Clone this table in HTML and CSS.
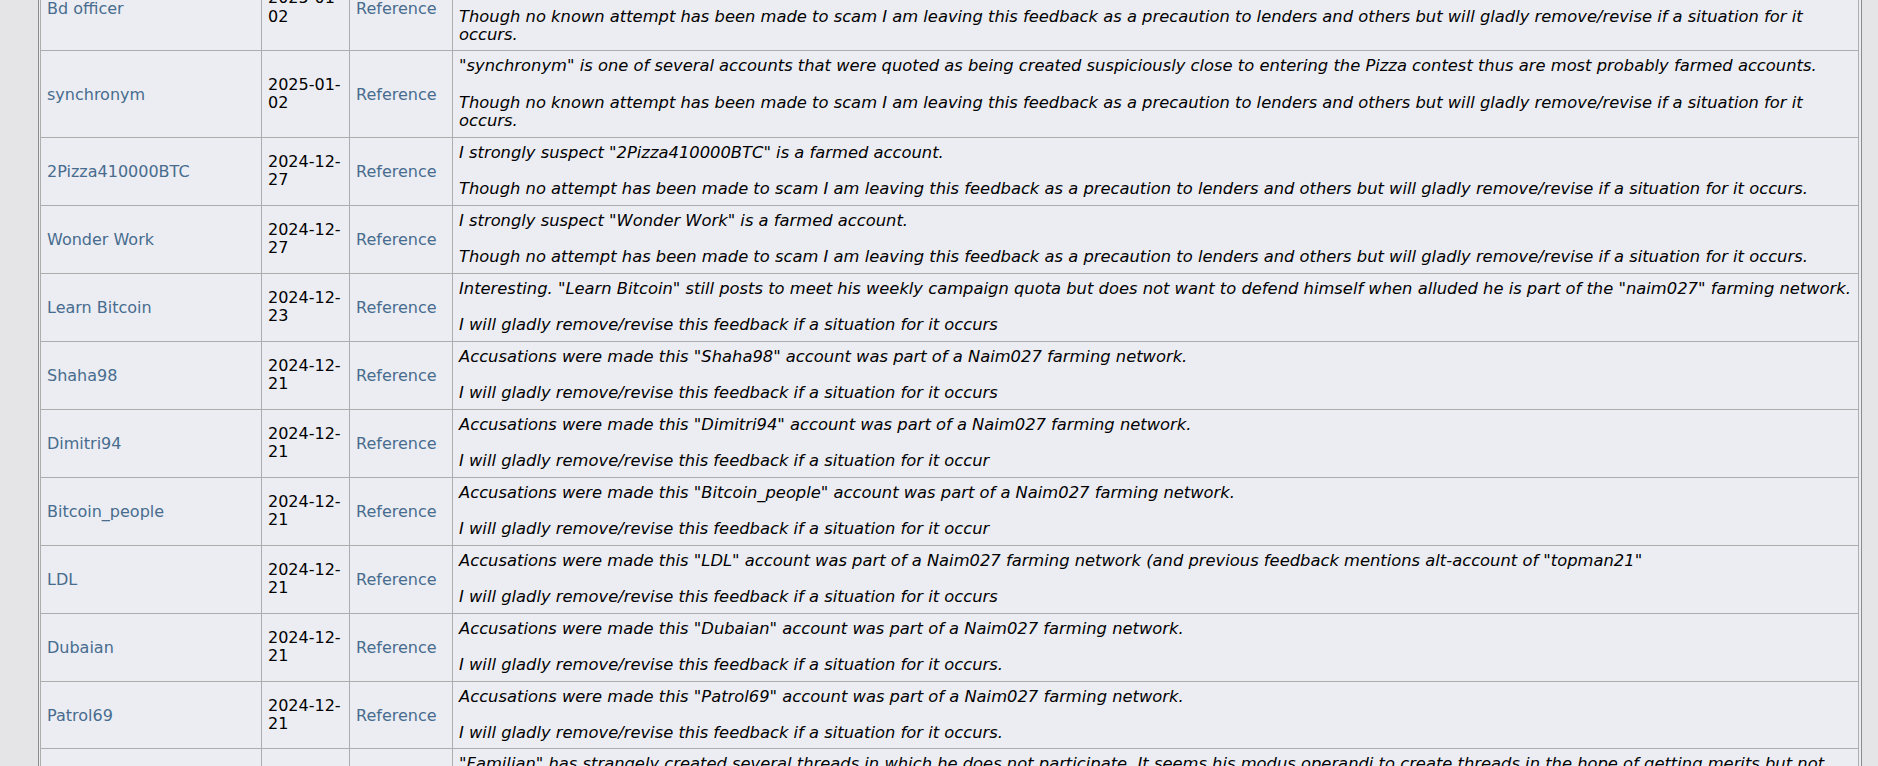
FILE: index.html
```html
<!DOCTYPE html>
<html lang="en">
<head>
<meta charset="utf-8">
<title>Trust feedback</title>
<link rel="stylesheet" href="styles.css">
</head>
<body>
<div class="frame">
  <table class="trust">
    <colgroup>
      <col class="c-user">
      <col class="c-date">
      <col class="c-ref">
      <col class="c-msg">
    </colgroup>
    <tbody>
      <tr class="tall">
        <td class="user"><a href="#">Bd officer</a></td>
        <td class="date">2025-01-02</td>
        <td class="ref"><a href="#">Reference</a></td>
        <td class="msg">"Bd officer" is one of several accounts that were quoted as being created suspiciously close to entering the Pizza contest thus are most probably farmed accounts.<br><br>Though no known attempt has been made to scam I am leaving this feedback as a precaution to lenders and others but will gladly remove/revise if a situation for it occurs.</td>
      </tr>
      <tr>
        <td class="user"><a href="#">synchronym</a></td>
        <td class="date">2025-01-02</td>
        <td class="ref"><a href="#">Reference</a></td>
        <td class="msg">"synchronym" is one of several accounts that were quoted as being created suspiciously close to entering the Pizza contest thus are most probably farmed accounts.<br><br>Though no known attempt has been made to scam I am leaving this feedback as a precaution to lenders and others but will gladly remove/revise if a situation for it occurs.</td>
      </tr>
      <tr>
        <td class="user"><a href="#">2Pizza410000BTC</a></td>
        <td class="date">2024-12-27</td>
        <td class="ref"><a href="#">Reference</a></td>
        <td class="msg">I strongly suspect "2Pizza410000BTC" is a farmed account.<br><br>Though no attempt has been made to scam I am leaving this feedback as a precaution to lenders and others but will gladly remove/revise if a situation for it occurs.</td>
      </tr>
      <tr>
        <td class="user"><a href="#">Wonder Work</a></td>
        <td class="date">2024-12-27</td>
        <td class="ref"><a href="#">Reference</a></td>
        <td class="msg">I strongly suspect "Wonder Work" is a farmed account.<br><br>Though no attempt has been made to scam I am leaving this feedback as a precaution to lenders and others but will gladly remove/revise if a situation for it occurs.</td>
      </tr>
      <tr>
        <td class="user"><a href="#">Learn Bitcoin</a></td>
        <td class="date">2024-12-23</td>
        <td class="ref"><a href="#">Reference</a></td>
        <td class="msg">Interesting. "Learn Bitcoin" still posts to meet his weekly campaign quota but does not want to defend himself when alluded he is part of the "naim027" farming network.<br><br>I will gladly remove/revise this feedback if a situation for it occurs</td>
      </tr>
      <tr>
        <td class="user"><a href="#">Shaha98</a></td>
        <td class="date">2024-12-21</td>
        <td class="ref"><a href="#">Reference</a></td>
        <td class="msg">Accusations were made this "Shaha98" account was part of a Naim027 farming network.<br><br>I will gladly remove/revise this feedback if a situation for it occurs</td>
      </tr>
      <tr>
        <td class="user"><a href="#">Dimitri94</a></td>
        <td class="date">2024-12-21</td>
        <td class="ref"><a href="#">Reference</a></td>
        <td class="msg">Accusations were made this "Dimitri94" account was part of a Naim027 farming network.<br><br>I will gladly remove/revise this feedback if a situation for it occur</td>
      </tr>
      <tr>
        <td class="user"><a href="#">Bitcoin_people</a></td>
        <td class="date">2024-12-21</td>
        <td class="ref"><a href="#">Reference</a></td>
        <td class="msg">Accusations were made this "Bitcoin_people" account was part of a Naim027 farming network.<br><br>I will gladly remove/revise this feedback if a situation for it occur</td>
      </tr>
      <tr>
        <td class="user"><a href="#">LDL</a></td>
        <td class="date">2024-12-21</td>
        <td class="ref"><a href="#">Reference</a></td>
        <td class="msg">Accusations were made this "LDL" account was part of a Naim027 farming network (and previous feedback mentions alt-account of "topman21"<br><br>I will gladly remove/revise this feedback if a situation for it occurs</td>
      </tr>
      <tr>
        <td class="user"><a href="#">Dubaian</a></td>
        <td class="date">2024-12-21</td>
        <td class="ref"><a href="#">Reference</a></td>
        <td class="msg">Accusations were made this "Dubaian" account was part of a Naim027 farming network.<br><br>I will gladly remove/revise this feedback if a situation for it occurs.</td>
      </tr>
      <tr>
        <td class="user"><a href="#">Patrol69</a></td>
        <td class="date">2024-12-21</td>
        <td class="ref"><a href="#">Reference</a></td>
        <td class="msg">Accusations were made this "Patrol69" account was part of a Naim027 farming network.<br><br>I will gladly remove/revise this feedback if a situation for it occurs.</td>
      </tr>
      <tr>
        <td class="user"><a href="#">Familian</a></td>
        <td class="date">2024-12-20</td>
        <td class="ref"><a href="#">Reference</a></td>
        <td class="msg">"Familian" has strangely created several threads in which he does not participate. It seems his modus operandi to create threads in the hope of getting merits but not participating in the discussions that follow.<br><br>I will gladly remove/revise this feedback if a situation for it occurs.</td>
      </tr>
    </tbody>
  </table>
</div>
</body>
</html>
```

FILE: styles.css
```css
html, body {
  margin: 0;
  padding: 0;
}

body {
  background: #e5e5e8;
  font-family: "DejaVu Sans", Verdana, sans-serif;
  font-size: 16px;
  line-height: 18.33px;
  color: #000;
  overflow: hidden;
  height: 766px;
}

.frame {
  margin: -38px 16px 0 38px;
  border: 1px solid #8c8c8c;
  padding: 1px 2px 1px 1px;
  background: #ecedf3;
}

.trust {
  width: 100%;
  table-layout: fixed;
  border-collapse: separate;
  border-spacing: 1px;
  background: #adadad;
}

.c-user { width: 220px; }
.c-date { width: 87px; }
.c-ref { width: 102px; }

.trust td {
  background: #ecedf3;
  padding: 6px;
  vertical-align: middle;
}

.trust td.user,
.trust td.ref {
  padding-top: 7.5px;
  padding-bottom: 4.5px;
}

.trust td.msg {
  vertical-align: top;
  font-style: italic;
  font-size: 16.33px;
}

.trust a {
  color: #476c8e;
  text-decoration: none;
}
```
